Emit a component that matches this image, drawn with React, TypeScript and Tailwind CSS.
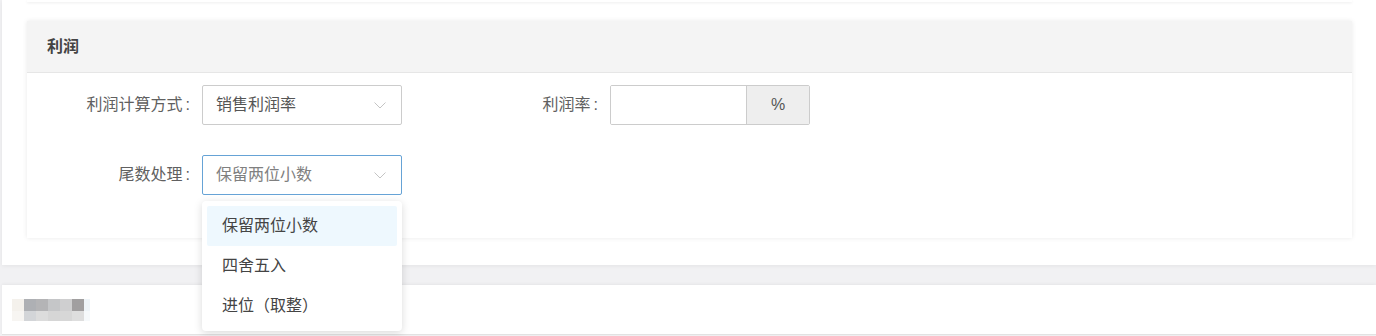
import React from 'react';

const ChevronDown: React.FC = () => (
  <svg width="12" height="7" viewBox="0 0 12 7" fill="none" className="shrink-0">
    <polyline points="0.5,0.5 6,6 11.5,0.5" stroke="#c4c4c4" strokeWidth="1" />
  </svg>
);

const Label: React.FC<{ text: string }> = ({ text }) => (
  <div className="w-[163px] shrink-0 text-right text-[16px] text-[#606060]">
    {text}
    <span className="ml-[3px]">:</span>
  </div>
);

const mosaic = [
  ['#f4f1ec', '#aeb0b4', '#b4b4b6', '#c5c6c8', '#cfcfd0', '#a19fa0', '#eef4f8'],
  ['#f7f5f2', '#d3d5d8', '#dcdcdc', '#d6d6d6', '#d7d7d7', '#dedede', '#f6f9fb'],
];

const App: React.FC = () => {
  const options = ['保留两位小数', '四舍五入', '进位（取整）'];

  return (
    <div className="w-[1376px] h-[336px] overflow-hidden bg-[#f1f1f3] font-['Liberation_Sans','Noto_Sans_CJK_SC',sans-serif]">
      {/* main panel */}
      <div className="ml-[2px] h-[265px] bg-white shadow-[0_1px_4px_rgba(0,0,0,0.06)] relative z-10">
        {/* previous card edge */}
        <div className="ml-[25px] w-[1325px] h-[2px] bg-white shadow-[0_1px_3px_rgba(0,0,0,0.08)]" />

        {/* profit card */}
        <div className="ml-[25px] mt-[19px] w-[1325px] bg-white shadow-[0_0_5px_rgba(0,0,0,0.09)]">
          <div className="h-[52px] flex items-center pl-[20px] bg-[#f4f4f4] border-b border-[#e6e6e6]">
            <span className="text-[16px] font-bold text-[#444]">利润</span>
          </div>

          <div className="pt-[12px] pb-[43px] flex flex-col gap-[30px]">
            {/* row 1 */}
            <div className="flex items-center h-[40px]">
              <Label text="利润计算方式" />
              <div className="ml-[12px] w-[200px] h-[40px] flex items-center justify-between pl-[13px] pr-[15px] border border-[#cccccc] rounded-[2px] bg-white">
                <span className="text-[16px] text-[#555]">销售利润率</span>
                <ChevronDown />
              </div>

              <div className="ml-[33px] w-[163px] shrink-0 text-right text-[16px] text-[#606060]">
                利润率<span className="ml-[3px]">:</span>
              </div>
              <div className="ml-[12px] w-[200px] h-[40px] flex border border-[#cccccc] rounded-[2px] overflow-hidden">
                <div className="w-[135px] bg-white" />
                <div className="flex-1 flex items-center justify-center bg-[#eeeeee] border-l border-[#cccccc] text-[16px] text-[#555]">
                  %
                </div>
              </div>
            </div>

            {/* row 2 */}
            <div className="flex items-center h-[40px]">
              <Label text="尾数处理" />
              <div className="ml-[12px] w-[200px] relative">
                <div className="h-[40px] flex items-center justify-between pl-[13px] pr-[15px] border border-[#66a3d6] rounded-[2px] bg-white">
                  <span className="text-[16px] text-[#808080]">保留两位小数</span>
                  <ChevronDown />
                </div>

                {/* dropdown menu */}
                <div className="absolute left-0 top-[46px] w-[200px] p-[5px] bg-white rounded-[4px] shadow-[0_2px_8px_rgba(0,0,0,0.15)] z-20">
                  {options.map((opt, i) => (
                    <div
                      key={opt}
                      className={
                        i === 0
                          ? 'h-[40px] flex items-center pl-[15px] rounded-[2px] bg-[#eef8fe] text-[16px] text-[#444]'
                          : 'h-[40px] flex items-center pl-[15px] text-[16px] text-[#444]'
                      }
                    >
                      {opt}
                    </div>
                  ))}
                </div>
              </div>
            </div>
          </div>
        </div>
      </div>

      {/* lower panel */}
      <div className="ml-[2px] mt-[20px] h-[50px] bg-white border-b border-[#e2e2e2] shadow-[0_-1px_3px_rgba(0,0,0,0.05)] flex items-center">
        <div className="ml-[10px] flex flex-col">
          {mosaic.map((row, r) => (
            <div key={r} className={r === 0 ? 'flex h-[12px]' : 'flex h-[10px]'}>
              {row.map((c, i) => (
                <div key={i} className={i === 6 ? 'w-[6px]' : 'w-[12px]'} style={{ backgroundColor: c }} />
              ))}
            </div>
          ))}
        </div>
      </div>
    </div>
  );
};

export default App;
